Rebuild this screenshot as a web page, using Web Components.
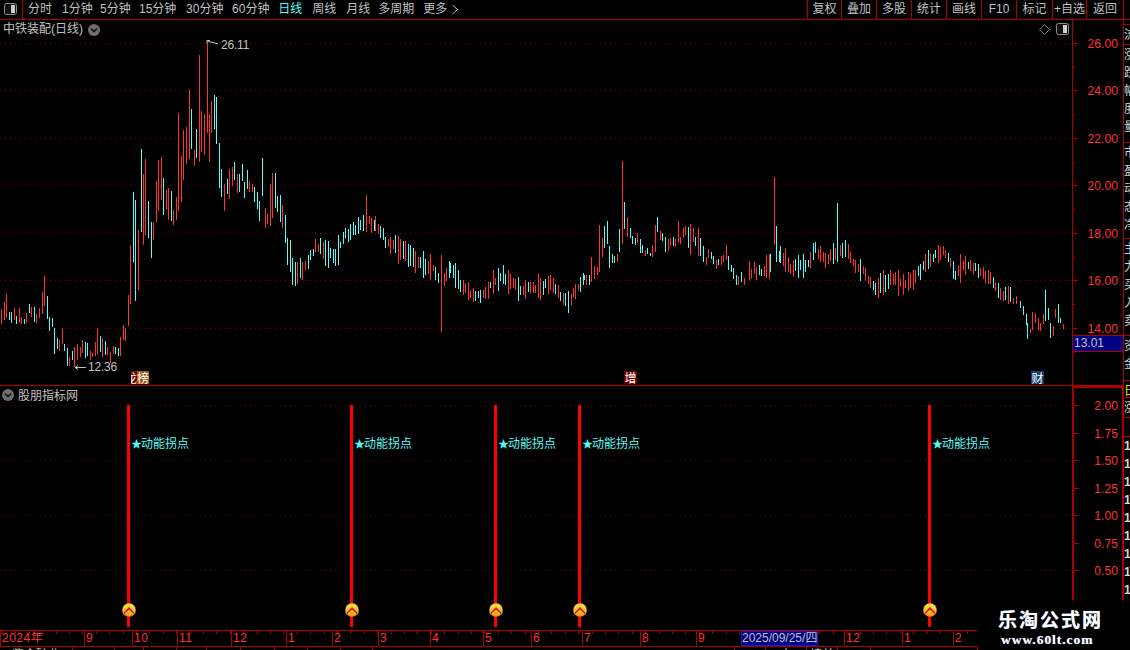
<!DOCTYPE html>
<html lang="zh"><head><meta charset="utf-8"><title>K线</title>
<style>
html,body{margin:0;background:#000;overflow:hidden}
body{font:12px "Liberation Sans","Noto Sans CJK SC",sans-serif;color:#c0c0c0}
</style></head><body>
<kline-app></kline-app>
<script>
const LINE='#aa0000',RED='#ff3232',CY='#54fcfc',GR='#c0c0c0';
const FONT='"Liberation Sans","Noto Sans CJK SC",sans-serif';
function shadow(el,html){el.attachShadow({mode:'open'}).innerHTML=html;return el.shadowRoot}

class PanelIcon extends HTMLElement{connectedCallback(){shadow(this,`<style>:host{display:inline-flex;width:13px;height:12px}</style>
<svg width="13" height="12" viewBox="0 0 13 12"><rect x=".5" y=".5" width="12" height="11" rx="2" fill="#111" stroke="#8e8e8e"/><rect x="7" y="2" width="4" height="8" fill="#cfcfcf"/></svg>`)}}
customElements.define('panel-icon',PanelIcon);

class RoundChevron extends HTMLElement{connectedCallback(){shadow(this,`<style>:host{display:inline-flex;width:12px;height:12px}</style>
<svg width="12" height="12" viewBox="0 0 12 12"><circle cx="6" cy="6" r="6" fill="#6e6e6e"/><path d="M3 4.5 6 7.5 9 4.5" fill="none" stroke="#111" stroke-width="1.6"/></svg>`)}}
customElements.define('round-chevron',RoundChevron);

class ToolBar extends HTMLElement{connectedCallback(){
const left=[['分时',0],['1分钟',10],['5分钟',7.3],['15分钟',8.3],['30分钟',9.7],['60分钟',8.7],['日线',8.7,1],['周线',10],['月线',10],['多周期',8],['更多',9]];
const right=[['复权',34],['叠加',35],['多股',35],['统计',35],['画线',35],['F10',35],['标记',36],['+自选',34],['返回',38]];
shadow(this,`<style>
:host{display:flex;height:20px;box-sizing:border-box;border-bottom:1px solid ${LINE};font:12px ${FONT};color:${GR};line-height:19px;white-space:nowrap}
.ic{width:23px;box-sizing:border-box;border-right:1px solid ${LINE};display:flex;align-items:center;justify-content:center;padding:0 1px 1px 0}
.l{display:flex;padding-left:5px;flex:1}
.on{color:${CY}}
.more{display:inline-flex;align-items:center;margin-left:4px}
.r{display:flex;margin-right:6px}
.r span{box-sizing:border-box;border-left:1px solid ${LINE};text-align:center}
.r span:last-child{border-right:1px solid ${LINE}}
</style><div class="ic"><panel-icon></panel-icon></div>
<div class="l">${left.map(a=>`<span class="${a[2]?'on':''}" style="margin-left:${a[1]}px">${a[0]}</span>`).join('')}
<span class="more"><svg width="8" height="11" viewBox="0 0 8 11"><path d="M1.5 1 6.5 5.5 1.5 10" fill="none" stroke="${GR}"/></svg></span></div>
<div class="r">${right.map(a=>`<span style="width:${a[1]}px">${a[0]}</span>`).join('')}</div>`)}}
customElements.define('tool-bar',ToolBar);

class PriceAxis extends HTMLElement{connectedCallback(){
const h=+this.getAttribute('h'),ticks=JSON.parse(this.getAttribute('ticks')),thick=this.hasAttribute('thick');
const body=ticks.map(t=>{const maj=t[1]!==null;return `<rect x="${thick?2:1}" y="${t[0]}" width="${maj?5:2}" height="1" fill="${LINE}"/>`+(maj?`<text x="46" y="${t[0]+5}" text-anchor="end">${t[1]}</text>`:'')}).join('');
shadow(this,`<style>:host{display:block;width:52px;height:${h}px;position:relative;box-sizing:border-box}
svg{display:block}text{font:12px ${FONT};fill:${RED};letter-spacing:.1px}</style>
<svg width="52" height="${h}" shape-rendering="crispEdges"><rect x="0" width="${thick?2:1}" height="${h}" fill="${LINE}"/><rect x="${thick?50:51}" width="${thick?2:1}" height="${h}" fill="${LINE}"/>${thick?`<rect width="52" height="2" fill="${LINE}"/>`:''}${body}</svg><slot></slot>`)}}
customElements.define('price-axis',PriceAxis);

class PriceTag extends HTMLElement{connectedCallback(){shadow(this,`<style>:host{position:absolute;left:1px;top:315px;width:50px;height:17px;box-sizing:border-box;background:#000080;border:solid ${LINE};border-width:1px 0;color:${GR};font:12px/14px ${FONT};padding-left:1px}</style><slot></slot>`)}}
customElements.define('price-tag',PriceTag);

class MarkBadge extends HTMLElement{connectedCallback(){shadow(this,`<style>:host{position:absolute;top:351px;height:13px;display:flex;color:#fff;font:12px/13px "Noto Sans CJK SC",sans-serif;overflow:hidden}
::slotted(span){display:block;overflow:hidden;white-space:nowrap}</style><slot></slot>`)}}
customElements.define('mark-badge',MarkBadge);

class CandlePane extends HTMLElement{connectedCallback(){
const E=`1r309-324 4r302-320 6r294-318 9c312-320 11c312-323 14r308-320 16c316-324 19r308-323 21r317-324 24c319-324 26r313-323 29c304-313 31r307-317 34c307-322 36r314-323 39r308-318 42r292-314 44r276-306 47c296-319 49c317-331 52c318-327 54c328-354 57c338-349 59r340-351 62r328-344 64c344-351 67c348-366 69r357-366 72c351-360 74r347-367 77r344-360 80r347-357 82r340-353 85c342-358 87c343-356 90r351-360 92r353-357 95r342-356 97r328-354 100c336-352 102r338-357 105c341-355 107r347-355 110r352-363 113r346-354 115c347-354 118c348-356 120r337-356 123r325-340 125r328-341 128r295-326 130r245-304 133c192-262 135c200-301 138r230-290 141c149-232 143r174-245 145r159-235 148c201-238 151c222-258 153r222-240 156r181-222 158r160-211 161r157-200 163c178-215 166r190-210 168r188-220 171c191-221 173r210-225 176r197-220 178r113-211 181r156-202 183r130-180 186r127-164 189r90-159 191c109-149 194r150-166 196c129-158 199r55-162 201r111-152 204r114-155 207r43-133 209r114-162 211r101-133 214c95-129 216c97-144 219c143-188 221c169-197 224r184-211 227c179-194 229r169-199 232r167-186 234c162-180 237r174-193 239c174-192 242c164-181 244c182-198 247c170-189 249r181-192 252r184-192 254c187-202 257c192-209 259c201-221 262c158-196 265r208-228 267r214-224 270r184-226 272r173-218 275c173-208 277c196-212
280c195-222 282r205-228 285c215-243 287c238-265 290c240-272 292c258-285 295c262-286 297r262-284 300c258-278 302r262-280
584c275-280 586r275-285 589c275-285 591r257-282 594r266-279 597r267-275 599r225-272 602r238-257 604c226-248 607c221-244 609c246-268 612c254-263 614c256-263 617r254-262 619c229-252 622r161-244 624c202-229 627r217-237 630c228-238 632c236-244 635c238-245 637r233-243 640c239-253 642c245-253 645r250-256 647c248-254 650c253-256 652r245-257 655r225-252 657c217-232 660r231-240 662c233-241 665c237-252 668r239-251 670r238-246 673c237-246 675r239-247 678r221-243 680r237-244 683r228-238 685r226-235 688c227-248 690r224-255 693r228-242 695c237-246 698r228-256 700c238-256 703c246-262 706r257-265 708r249-258 711c252-259 713c256-264 716r260-269 718c259-265 721r256-265 723r255-262 726r245-260 728c256-270 731c265-272 733c268-279 736c275-285 738r276-285 741c272-282 744r278-285 749r261-280 751r269-279 754r262-274 756r267-280 759c265-275
1013r298-304 1016r296-304 1020c301-308 1023c306-315 1026c314-325 1027c323-339 1030r329-333 1032r312-330 1035r313-323 1038r318-330 1040r323-331 1043r314-324 1045c290-321 1048c308-320 1050c323-338 1053r326-336 1055r309-318 1058c304-323 1060c318-323 1063r324-329
366r195-232 441r255-332 774r177-245 776c226-262 837c203-262`;
let bars=E.trim().split(/\s+/).map(s=>{const m=s.match(/(\d+)([rc])(\d+)-(\d+)/);return [+m[1],m[2],+m[3],+m[4]]});
const spikeX=[366,441,774,776,837];
const keys=[[305,268],[315,245],[325,252],[335,255],[345,235],[355,228],[366,222],[375,225],[385,240],[400,250],[415,260],[430,268],[441,280],[450,270],[460,285],[470,292],[480,297],[490,287],[500,275],[510,283],[520,290],[535,288],[550,283],[560,295],[568,303],[575,290],[583,280],
[761,270],[770,265],[774,250],[780,255],[790,268],[805,265],[815,250],[825,262],[837,250],[845,248],[855,265],[865,275],[875,288],[890,278],[905,285],[920,270],[930,258],[945,252],[955,275],[965,265],[980,270],[990,280],[1000,295],[1011,292]];
let seed=11;const rnd=()=>(seed=(seed*16807)%2147483647)/2147483647;
let col='r';
for(let i=0;i<keys.length-1;i++){const a=keys[i],b=keys[i+1];if(b[0]-a[0]>100)continue;
 for(let x=a[0];x<b[0];x+=2.5){const X=Math.round(x);if(spikeX.some(s=>Math.abs(s-X)<2))continue;
  const c=a[1]+(b[1]-a[1])*(x-a[0])/(b[0]-a[0])+(rnd()-.5)*5;const h=3+rnd()*rnd()*12+rnd()*2;
  if(rnd()<.4)col=col=='r'?'c':'r';
  bars.push([X,col,Math.round(c-h),Math.round(c+h)])}}
const grid=[43,90,138,185,233,280,328].map(y=>`<line x1="0" x2="1072" y1="${y-19.5}" y2="${y-19.5}" stroke="#900000" stroke-dasharray="1 4"/>`).join('');
const sv=bars.map(b=>`<rect x="${b[0]}" y="${b[2]-20}" width="1" height="${b[3]-b[2]}" fill="${b[1]=='r'?RED:CY}"/>`).join('');
const ticks=[[43,'26.00'],[67,null],[90,'24.00'],[114,null],[138,'22.00'],[162,null],[185,'20.00'],[209,null],[233,'18.00'],[257,null],[280,'16.00'],[304,null],[328,'14.00'],[352,null]].map(t=>[t[0]-20,t[1]]);
shadow(this,`<style>:host{display:flex;height:366px;box-sizing:border-box;border-bottom:1px solid ${LINE};font:12px ${FONT};color:${GR}}
.plot{width:1072px;height:365px;position:relative;overflow:hidden}
svg{display:block}
.title{position:absolute;left:3px;top:2px;display:flex;align-items:center;gap:5px;line-height:15px}
.tools{position:absolute;right:3px;top:3px;display:flex;align-items:center;gap:6px}
.lbl{position:absolute;line-height:14px;letter-spacing:-.2px}
</style><div class="plot"><svg width="1072" height="365" shape-rendering="crispEdges">${grid}${sv}
<g shape-rendering="auto" fill="none" stroke="${GR}"><path d="M207 20.5h3M207 20.5v3M207.5 21.5 213 22.5 218 24"/><path d="M75 347.5H86M75 347.5l3-2M75 347.5l3 2"/></g></svg>
<div class="title"><span>中铁装配(日线)</span><round-chevron></round-chevron></div>
<div class="tools"><svg width="11" height="11" viewBox="0 0 11 11"><path d="M5.5.5 10.5 5.5 5.5 10.5.5 5.5Z" fill="none" stroke="#777"/></svg><panel-icon></panel-icon></div>
<span class="lbl" style="left:221px;top:18px">26.11</span><span class="lbl" style="left:88px;top:340px">12.36</span>
<mark-badge style="left:131px"><span style="width:6px;background:#800000;font-size:12px;direction:rtl">龙</span><span style="width:12px;background:#9c5a10">榜</span></mark-badge>
<mark-badge style="left:624px"><span style="width:13px;background:#700000;text-align:center">增</span></mark-badge>
<mark-badge style="left:1031px"><span style="width:13px;background:#10406c;text-align:center">财</span></mark-badge>
</div><price-axis h="365" ticks='${JSON.stringify(ticks)}'><price-tag>13.01</price-tag></price-axis>`)}}
customElements.define('candle-pane',CandlePane);

class SignalMarker extends HTMLElement{connectedCallback(){const x=+this.getAttribute('x');
shadow(this,`<style>:host{position:absolute;left:${x-1}px;top:19px;width:3px;height:222px;background:#ff0000}
.t{position:absolute;left:5px;top:30px;color:${CY};font:12px/16px "Noto Sans CJK SC",sans-serif;white-space:nowrap}
.s{font-size:11px;display:inline-block;width:10px;margin-left:-1px}
svg{position:absolute;left:-5px;top:198px}</style>
<span class="t"><span class="s">★</span>动能拐点</span>
<svg width="14" height="14" viewBox="-7 -7 14 14"><defs><linearGradient id="g" x1="0" x2="0" y1="0" y2="1"><stop offset="0" stop-color="#ffe648"/><stop offset=".55" stop-color="#fcc030"/><stop offset="1" stop-color="#f08a18"/></linearGradient></defs><circle r="6.8" fill="url(#g)" stroke="#8a5a10" stroke-width=".4"/><path d="M-5 2.2 0-3 5 2.2 5 4 0-.4-5 4Z" fill="#c8160c"/></svg>`)}}
customElements.define('signal-marker',SignalMarker);

class IndicatorPane extends HTMLElement{connectedCallback(){
const grid=[405,460,515,570].map(y=>`<line x1="0" x2="1072" y1="${y-385.5}" y2="${y-385.5}" stroke="#600000" stroke-dasharray="1 4"/>`).join('');
const ticks=[[405,'2.00'],[433,'1.75'],[460,'1.50'],[488,'1.25'],[515,'1.00'],[543,'0.75'],[570,'0.50']].map(t=>[t[0]-386,t[1]]);
shadow(this,`<style>:host{display:flex;height:244px;font:12px ${FONT};color:${GR}}
.plot{width:1072px;height:244px;position:relative}svg{display:block}
.title{position:absolute;left:2px;top:1px;display:flex;align-items:center;gap:4px;line-height:15px;font-family:"Noto Sans CJK SC",sans-serif}
</style><div class="plot"><svg width="1072" height="244">${grid}</svg>
<div class="title"><round-chevron></round-chevron><span>股朋指标网</span></div>
${[128,351,495,579,929].map(x=>`<signal-marker x="${x}"></signal-marker>`).join('')}</div>
<price-axis thick h="244" ticks='${JSON.stringify(ticks)}'></price-axis>`)}}
customElements.define('indicator-pane',IndicatorPane);

class TimeAxis extends HTMLElement{connectedCallback(){
const cells=[['2024年',84],['9',48],['10',45],['11',54],['12',55],['1',46],['2',46],['3',52],['4',53],['5',48],['6',51],['7',58],['8',56],['9',148,1],['12',58],['1',51],['2',25]];
shadow(this,`<style>:host{display:flex;width:978px;height:17px;box-sizing:border-box;border:solid ${LINE};border-width:1px 0;color:${RED};font:12px/15px ${FONT};
background:repeating-linear-gradient(90deg,${LINE} 0 1px,transparent 1px 13.4px) 2px 0/100% 3px no-repeat;white-space:nowrap;letter-spacing:.5px}
.c{box-sizing:border-box;border-left:1px solid ${LINE};padding-left:1px;display:flex;background:linear-gradient(#000,#000) 0 3px/100% 100% no-repeat}
.c:first-child{border-left:0;padding-left:2px}
.d{margin-left:36px;background:#000080;color:${GR};width:77px;letter-spacing:0;text-align:center;height:15px;font-size:12px;outline:1px solid #1818c8;outline-offset:-1px}
</style>${cells.map(c=>`<div class="c" style="width:${c[1]}px">${c[0]}${c[2]?'<span class="d">2025/09/25/四</span>':''}</div>`).join('')}`)}}
customElements.define('time-axis',TimeAxis);

class StatusRow extends HTMLElement{connectedCallback(){
const c=[[73,'紫金矿业'],[42,''],[29,''],[33,''],[30,''],[34,''],[34,''],[33,''],[33,''],[32,''],[362,''],[31,''],[41,'大'],[31,'榜单'],[33,''],[107,'']];
shadow(this,`<style>:host{display:flex;height:3px;overflow:hidden;font:12px/14px "Noto Sans CJK SC",sans-serif;color:${GR}}
div{box-sizing:border-box;border-right:1px solid ${LINE};white-space:nowrap;text-align:center;overflow:hidden}</style>
${c.map(x=>`<div style="width:${x[0]}px">${x[1]}</div>`).join('')}`)}}
customElements.define('status-row',StatusRow);

class SideStrip extends HTMLElement{connectedCallback(){
const rows=[[5,'',0],[20,'流',1],[98,'涨跌幅度量',1],[96,'市盈动态净',1],[97,'主力买入卖',1],[45,'资金',1],[17,'日',2],[20,'涨',1],[19,'',1],[163,'111111111',0]];
shadow(this,`<style>:host{display:block;width:6px;height:630px;overflow:hidden;font:12px/18px "Noto Sans CJK SC",sans-serif;color:#d8d8d8}
.r{box-sizing:border-box;border-bottom:1px solid ${LINE};overflow:hidden;word-break:break-all;width:6px}
.r span{display:block;width:12px}
.y{color:#e0e000}.n{border:0}.n span{width:9px;font-weight:700;font-family:"Liberation Sans",sans-serif;line-height:18px;margin-left:0}</style>
${rows.map((r,i)=>`<div class="r ${r[2]==2?'y':''} ${i==9?'n':''}" style="height:${r[0]}px"><span>${r[1]}</span></div>`).join('')}`)}}
customElements.define('side-strip',SideStrip);

class WaterMark extends HTMLElement{connectedCallback(){shadow(this,`<style>:host{position:absolute;right:0;bottom:0;width:152px;height:50px;background:#000;color:#fff;display:flex;flex-direction:column;align-items:flex-start;padding:8px 0 0 20px;box-sizing:border-box;text-shadow:0 0 1px #8aa8d8}
.a{font:700 19px/22px "Noto Sans CJK SC",serif;letter-spacing:2px}
.b{font:700 13.5px/16px "Liberation Serif",serif;letter-spacing:.95px;margin:2px 0 0 3px}</style><div class="a">乐淘公式网</div><div class="b">www.60lt.com</div>`)}}
customElements.define('water-mark',WaterMark);

class KlineApp extends HTMLElement{connectedCallback(){shadow(this,`<style>:host{display:block;position:relative;width:1130px;height:650px;overflow:hidden;background:#000}
.m{display:flex}.c{width:1124px}</style>
<tool-bar></tool-bar><div class="m"><div class="c"><candle-pane></candle-pane><indicator-pane></indicator-pane><time-axis></time-axis><status-row></status-row></div><side-strip></side-strip></div><water-mark></water-mark>`)}}
customElements.define('kline-app',KlineApp);
</script></body></html>
